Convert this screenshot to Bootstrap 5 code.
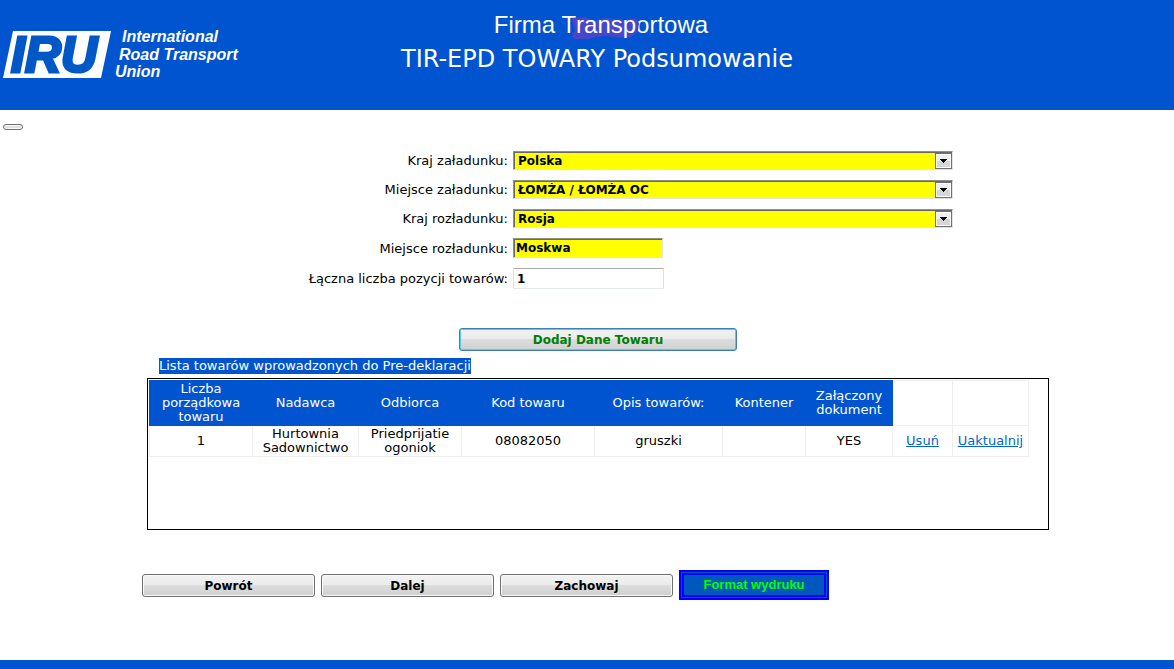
<!DOCTYPE html>
<html lang="pl">
<head>
<meta charset="utf-8">
<meta name="viewport" content="width=device-width, initial-scale=1">
<title>TIR-EPD TOWARY Podsumowanie</title>
<link rel="stylesheet" href="https://cdn.jsdelivr.net/npm/bootstrap@5.3.0/dist/css/bootstrap.min.css">
<style>
  :root { --iru-blue: #0054cf; }
  body { font-family: Verdana, "DejaVu Sans", sans-serif; font-size: 13px; line-height: 16px; color: #000; background: #fff; }
  .brand-bar { background: var(--iru-blue); color: #fff; height: 110px; display: grid; grid-template-columns: 1fr auto 1fr; }
  .brand-logo { margin: 20px 0 0 3px; }
  .brand-logo svg { overflow: visible; }
  .titles { padding: 8px 0 0 20px; }
  .titles h1, .titles h2 { font-size: 24px; line-height: 34px; font-weight: 400; margin: 0; }
  .titles h1 { font-family: Arial, "Liberation Sans", sans-serif; padding-left: 8px; }
  .smudged { position: relative; z-index: 0; }
  .smudged svg { position: absolute; left: -5px; top: 6px; z-index: -1; }
  .shift-col { padding-left: 22px; }
  .sheet { max-width: 912px; }

  .field-set { padding-top: 21px; gap: 10px; }
  .field-row { display: grid; grid-template-columns: minmax(0, 366px) 1fr; column-gap: 5px; align-items: center; }
  .field-row label { text-align: right; padding-top: 1px; }
  .field-row select, .field-row input { font-weight: 700; font-size: 12px; line-height: 15px; color: #000; border-radius: 0; outline: 0; }
  .field-row select, .sunken { background-color: #ff0; border: 1px solid; border-color: #8f8f8f #e3e3e3 #e3e3e3 #8f8f8f; box-shadow: inset 1px 1px 0 #696969; }
  .field-row select {
    appearance: none; width: 440px; max-width: 100%; height: 19px; padding: 2px 20px 0 4px;
    background-image: url("data:image/svg+xml,%3Csvg xmlns='http://www.w3.org/2000/svg' width='17' height='16' shape-rendering='crispEdges'%3E%3Crect width='17' height='16' fill='%23707070'/%3E%3Crect x='1' y='1' width='15' height='14' fill='%23fff'/%3E%3Crect x='2' y='2' width='13' height='6' fill='%23efefef'/%3E%3Crect x='2' y='8' width='13' height='6' fill='%23d6d6d6'/%3E%3Cpath d='M5 6h7v1h-1v1h-1v1h-1v1H8V9H7V8H6V7H5z'/%3E%3C/svg%3E");
    background-repeat: no-repeat; background-position: right 0 top 1px;
  }
  .field-row input { width: 150px; height: 20px; padding: 0 2px; }
  .field-row input.plain { width: 151px; height: 21px; padding: 0 3px; border: 1px solid; border-color: #abadb3 #dbdfe6 #e3e9ef #e2e3ea; border-radius: 1px; }

  .btn-classic {
    --bs-btn-font-size: 12px; --bs-btn-line-height: 15px; --bs-btn-font-weight: 700;
    --bs-btn-padding-x: 4px; --bs-btn-border-radius: 3px;
    --bs-btn-color: #000; --bs-btn-border-color: #707070;
    width: 173px; height: 23px; padding-top: 4px; padding-bottom: 2px; box-shadow: inset 0 0 0 1px #fafafa;
    background: linear-gradient(#f2f2f2, #ebebeb 49%, #dddddd 50%, #cfcfcf);
  }
  .btn-add { --bs-btn-color: #008000; --bs-btn-hover-color: #008000; --bs-btn-border-color: #3c7fb1; width: 278px; box-shadow: inset 0 0 0 1px #48d0f5; }
  .add-line { padding: 39px 0 7px; }
  .add-line .btn { display: block; margin: 0 auto; }
  .btn-tiny { width: 20px; height: 6px; padding: 0; margin: 14px 0 0 3px; border: 1px solid #707070; border-radius: 3px; background: #e2e2e2; box-shadow: inset 0 0 0 1px #fafafa; }
  .btn-print {
    width: 150px; height: 30px; padding: 0; border: 5px double #00f; border-radius: 0;
    background: #0058bf; color: #0f0; font: 700 13px/20px Arial, "Liberation Sans", sans-serif;
  }
  .actions { gap: 6px; margin-top: 40px; }

  .list-title { background: var(--iru-blue); color: #fff; margin-left: 17px; }
  .list-frame { border: 1px solid #000; height: 152px; margin: 4px 5px 0; padding: 1px; overflow: auto; }
  .goods { width: 879px; table-layout: fixed; border-collapse: collapse; line-height: 14px; text-align: center; }
  .goods th, .goods td { border: 1px solid #eee; padding: 1px; font-weight: 400; vertical-align: middle; }
  .goods thead tr { height: 45px; }
  .goods tbody tr { height: 31px; }
  .goods th { background: var(--iru-blue); color: #fff; border-color: var(--iru-blue); text-align: center; }
  .goods th, .goods thead td { padding: 0 1px; }
  .goods a { color: #0066cc; }
  .bottom-bar { background: var(--iru-blue); height: 9px; }
</style>
</head>
<body class="d-flex flex-column min-vh-100">

<header class="brand-bar">
  <div class="brand-logo">
    <svg width="250" height="74" role="img" aria-label="IRU International Road Transport Union" font-family="Arial, 'Liberation Sans', sans-serif" font-weight="700" font-style="italic">
      <path d="M10 11H108L98 58H0Z" fill="#fff"/>
      <text x="8" y="52" font-size="50" fill="#0058c6" stroke="#0058c6" stroke-width="3">IRU</text>
      <g font-size="16" fill="#fff">
        <text x="119" y="22">International</text>
        <text x="116" y="40">Road Transport</text>
        <text x="112" y="57">Union</text>
      </g>
    </svg>
  </div>
  <div class="titles text-center">
    <h1>Firma T<span class="smudged"><svg width="70" height="22" viewBox="0 0 70 22" aria-hidden="true"><path d="M1 1L14 0 24 4 34 1 54 3 64 1 68 6 67 14 60 20 50 21 36 19 24 20 18 22H3L1 18 4 14Z" fill="#4847c9"/></svg>ransp</span>ortowa</h1>
    <h2>TIR-EPD TOWARY Podsumowanie</h2>
  </div>
</header>

<main class="flex-grow-1">
  <button type="button" class="btn-tiny d-block" aria-label="Menu"></button>
  <div class="shift-col">
    <form class="sheet mx-auto">
      <div class="field-set d-flex flex-column">
        <div class="field-row"><label for="loadCountry">Kraj załadunku:</label>
          <select id="loadCountry"><option>Polska</option></select></div>
        <div class="field-row"><label for="loadPlace">Miejsce załadunku:</label>
          <select id="loadPlace"><option>ŁOMŻA / ŁOMŻA OC</option></select></div>
        <div class="field-row"><label for="unloadCountry">Kraj rozładunku:</label>
          <select id="unloadCountry"><option>Rosja</option></select></div>
        <div class="field-row"><label for="unloadPlace">Miejsce rozładunku:</label>
          <input id="unloadPlace" class="sunken" type="text" value="Moskwa"></div>
        <div class="field-row"><label for="itemCount">Łączna liczba pozycji towarów:</label>
          <input id="itemCount" class="plain" type="text" value="1"></div>
      </div>

      <div class="add-line"><button type="button" class="btn btn-classic btn-add">Dodaj Dane Towaru</button></div>

      <div class="d-flex"><span class="list-title">Lista towarów wprowadzonych do Pre-deklaracji</span></div>
      <div class="list-frame">
        <table class="goods">
          <colgroup><col style="width:103px"><col style="width:106px"><col style="width:103px"><col style="width:133px"><col style="width:128px"><col style="width:83px"><col style="width:87px"><col style="width:60px"><col style="width:76px"></colgroup>
          <thead>
            <tr><th>Liczba porządkowa towaru</th><th>Nadawca</th><th>Odbiorca</th><th>Kod towaru</th><th>Opis towarów:</th><th>Kontener</th><th>Załączony dokument</th><td></td><td></td></tr>
          </thead>
          <tbody>
            <tr><td>1</td><td>Hurtownia Sadownictwo</td><td>Priedprijatie ogoniok</td><td>08082050</td><td>gruszki</td><td></td><td>YES</td><td><a href="#">Usuń</a></td><td><a href="#">Uaktualnij</a></td></tr>
          </tbody>
        </table>
      </div>

      <div class="actions d-flex flex-wrap align-items-center">
        <button type="button" class="btn btn-classic">Powrót</button>
        <button type="button" class="btn btn-classic">Dalej</button>
        <button type="button" class="btn btn-classic">Zachowaj</button>
        <button type="button" class="btn-print">Format wydruku</button>
      </div>
    </form>
  </div>
</main>

<footer class="bottom-bar"></footer>
<script src="https://cdn.jsdelivr.net/npm/bootstrap@5.3.0/dist/js/bootstrap.bundle.min.js"></script>
</body>
</html>
